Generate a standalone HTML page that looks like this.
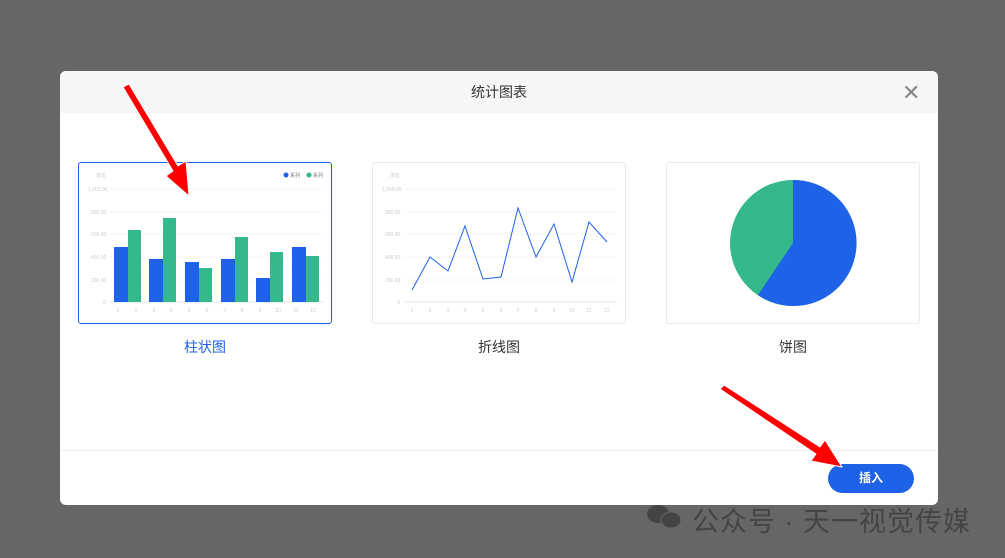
<!DOCTYPE html><html><head><meta charset="utf-8"><style>
body{margin:0;width:1005px;height:558px;background:#666;position:relative;overflow:hidden;font-family:"Liberation Sans","Noto Sans CJK SC",sans-serif}
.dlg{position:absolute;left:60px;top:71px;width:878px;height:434px;background:#fff;border-radius:6px;overflow:hidden}
.hd{height:42px;background:#f5f6f8;text-align:center;line-height:42px;font-size:14px;color:#333}
.card{position:absolute;top:91px;width:252px;height:160px;border:1px solid #e8e8e8;border-radius:3px}
.lbl{position:absolute;top:266px;font-size:14px;color:#333;width:120px;text-align:center}
.ft{position:absolute;left:0;right:0;top:379px;border-top:1px solid #eee}
.btn{position:absolute;left:768px;top:393px;width:86px;height:29px;border-radius:15px;background:#1e62e8;color:#fff;font-size:12px;text-align:center;line-height:29px;font-weight:bold}
.wm{position:absolute;top:500px;font-size:27px;color:#444;letter-spacing:1px}
</style></head><body>
<div class="dlg">
<div class="hd">统计图表</div>
<div style="position:absolute;left:842px;top:12px;font-size:22px;color:#888;line-height:20px">✕</div>
<div class="card" style="left:18px;border-color:#1e62e8"></div>
<div class="card" style="left:312px"></div>
<div class="card" style="left:606px"></div>
<div class="lbl" style="left:85px;color:#1e62e8">柱状图</div>
<div class="lbl" style="left:379px">折线图</div>
<div class="lbl" style="left:673px">饼图</div>
<div class="ft"></div>
<div class="btn">插入</div>
</div>
<svg width="1005" height="558" style="position:absolute;left:0;top:0" font-family="Liberation Sans" font-size="5" fill="#ccc">
<g stroke="#eee" stroke-dasharray="2,2">
<line x1="110" x2="323" y1="189" y2="189"/><line x1="110" x2="323" y1="212" y2="212"/><line x1="110" x2="323" y1="234" y2="234"/><line x1="110" x2="323" y1="257" y2="257"/><line x1="110" x2="323" y1="280" y2="280"/>
<line x1="405" x2="617" y1="189" y2="189"/><line x1="405" x2="617" y1="212" y2="212"/><line x1="405" x2="617" y1="234" y2="234"/><line x1="405" x2="617" y1="257" y2="257"/><line x1="405" x2="617" y1="280" y2="280"/>
</g>
<line x1="110" x2="323" y1="302" y2="302" stroke="#e5e5e5"/><line x1="405" x2="617" y1="302" y2="302" stroke="#e5e5e5"/>
<text x="96" y="177">单位</text><text x="88" y="191">1,000.00</text><text x="91" y="214">800.00</text><text x="91" y="236">600.00</text><text x="91" y="259">400.00</text><text x="91" y="282">200.00</text><text x="103" y="304">0</text>
<text x="390" y="177">单位</text><text x="382" y="191">1,000.00</text><text x="385" y="214">800.00</text><text x="385" y="236">600.00</text><text x="385" y="259">400.00</text><text x="385" y="282">200.00</text><text x="397" y="304">0</text>
<circle cx="286" cy="175" r="2.5" fill="#1e62e8"/><text x="290" y="177" fill="#777">系列</text><circle cx="309" cy="175" r="2.5" fill="#35b98b"/><text x="313" y="177" fill="#777">系列</text>
<g fill="#1e62e8"><rect x="114" y="247" width="14" height="55"/><rect x="149" y="259" width="14" height="43"/><rect x="185" y="262" width="14" height="40"/><rect x="221" y="259" width="14" height="43"/><rect x="256" y="278" width="14" height="24"/><rect x="292" y="247" width="14" height="55"/></g>
<g fill="#35b98b"><rect x="128" y="230" width="13" height="72"/><rect x="163" y="218" width="13" height="84"/><rect x="199" y="268" width="13" height="34"/><rect x="235" y="237" width="13" height="65"/><rect x="270" y="252" width="13" height="50"/><rect x="306" y="256" width="13" height="46"/></g>
<g text-anchor="middle"><text x="118" y="312">1</text><text x="136" y="312">2</text><text x="154" y="312">3</text><text x="171" y="312">4</text><text x="189" y="312">5</text><text x="207" y="312">6</text><text x="225" y="312">7</text><text x="242" y="312">8</text><text x="260" y="312">9</text><text x="278" y="312">10</text><text x="296" y="312">11</text><text x="313" y="312">12</text>
<text x="412" y="312">1</text><text x="430" y="312">2</text><text x="448" y="312">3</text><text x="465" y="312">4</text><text x="483" y="312">5</text><text x="501" y="312">6</text><text x="518" y="312">7</text><text x="536" y="312">8</text><text x="554" y="312">9</text><text x="572" y="312">10</text><text x="589" y="312">11</text><text x="607" y="312">12</text></g>
<polyline fill="none" stroke="#1e62e8" stroke-width="1" points="412,290 430,257 448,271 465,226 483,279 501,277 518,208 536,257 554,224 572,282 589,222 607,242"/>
<circle cx="793" cy="243" r="63" fill="#35b98b"/>
<path d="M793,243 L793,180 A63,63 0 1 1 758,295 Z" fill="#1e62e8"/>
<g fill="#f00" stroke="#fff" stroke-width="1" stroke-linejoin="round"><polygon points="123,87 129,84 178,166 186,161 189,196 166,176 173,171"/>
<polygon points="720,389 724,385 820,447 825,440 842,467 811,461 816,454"/></g>
<g fill="#444"><ellipse cx="658" cy="514" rx="11" ry="9"/><ellipse cx="671" cy="520" rx="10" ry="8" stroke="#666"/></g>
</svg>
<div class="wm" style="left:692px">公众号 · 天一视觉传媒</div>
</body></html>
